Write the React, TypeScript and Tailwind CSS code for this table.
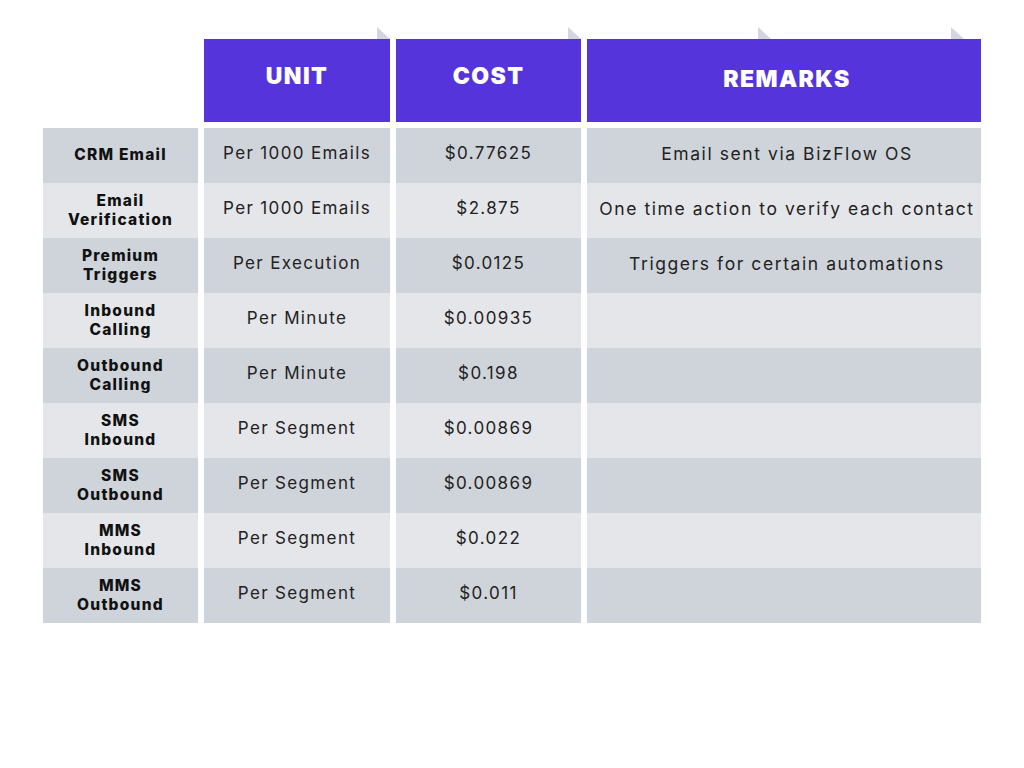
import React from "react";

const rows = [
  { label: ["CRM Email"], unit: "Per 1000 Emails", cost: "$0.77625", remark: "Email sent via BizFlow OS" },
  { label: ["Email", "Verification"], unit: "Per 1000 Emails", cost: "$2.875", remark: "One time action to verify each contact" },
  { label: ["Premium", "Triggers"], unit: "Per Execution", cost: "$0.0125", remark: "Triggers for certain automations" },
  { label: ["Inbound", "Calling"], unit: "Per Minute", cost: "$0.00935", remark: "" },
  { label: ["Outbound", "Calling"], unit: "Per Minute", cost: "$0.198", remark: "" },
  { label: ["SMS", "Inbound"], unit: "Per Segment", cost: "$0.00869", remark: "" },
  { label: ["SMS", "Outbound"], unit: "Per Segment", cost: "$0.00869", remark: "" },
  { label: ["MMS", "Inbound"], unit: "Per Segment", cost: "$0.022", remark: "" },
  { label: ["MMS", "Outbound"], unit: "Per Segment", cost: "$0.011", remark: "" },
];

const Fold = ({ className }: { className: string }) => (
  <svg className={`absolute top-[-12px] ${className}`} width="13" height="12" viewBox="0 0 13 12">
    <polygon points="0,0 0,12 13,12" fill="#d3d6dc" />
  </svg>
);

const HeaderCell = ({ title, children, pad }: { title: string; children?: React.ReactNode; pad: string }) => (
  <div className={`relative h-[83px] bg-[#5534dc] flex items-center justify-center ${pad}`}>
    {children}
    <span className="text-white text-[23px] font-black tracking-[0.06em] leading-none">{title}</span>
  </div>
);

export default function App() {
  return (
    <div
      className="w-[1024px] h-[768px] bg-white pt-[39px] pl-[43px]"
      style={{ fontFamily: "Inter, 'Noto Sans', sans-serif" }}
    >
      <div className="grid grid-cols-[155px_186px_185px_394px] gap-x-[6px] w-fit">
        <div />
        <HeaderCell title="UNIT" pad="pb-[8px]">
          <Fold className="right-0" />
        </HeaderCell>
        <HeaderCell title="COST" pad="pb-[8px]">
          <Fold className="right-0" />
        </HeaderCell>
        <HeaderCell title="REMARKS" pad="pb-[2px] pl-[6px]">
          <Fold className="right-[210px]" />
          <Fold className="right-[17px]" />
        </HeaderCell>

        <div className="col-span-4 h-[6px]" />

        {rows.map((r, i) => {
          const bg = i % 2 === 0 ? "bg-[#cfd3da]" : "bg-[#e5e6ea]";
          return (
            <React.Fragment key={i}>
              <div className={`${bg} h-[55px] flex flex-col items-center justify-center text-[15.5px] font-extrabold text-[#111] leading-[19px] tracking-[0.08em] pb-[2px]`}>
                {r.label.map((l) => (
                  <span key={l}>{l}</span>
                ))}
              </div>
              <div className={`${bg} h-[55px] flex items-center justify-center text-[17px] text-[#222] tracking-[0.08em] pb-[3px]`}>
                {r.unit}
              </div>
              <div className={`${bg} h-[55px] flex items-center justify-center text-[17px] text-[#222] tracking-[0.08em] pb-[3px]`}>
                {r.cost}
              </div>
              <div className={`${bg} h-[55px] flex items-center justify-center text-[17.5px] text-[#222] tracking-[0.09em] pb-[3px] pl-[6px]`}>
                {r.remark}
              </div>
            </React.Fragment>
          );
        })}
      </div>
    </div>
  );
}
